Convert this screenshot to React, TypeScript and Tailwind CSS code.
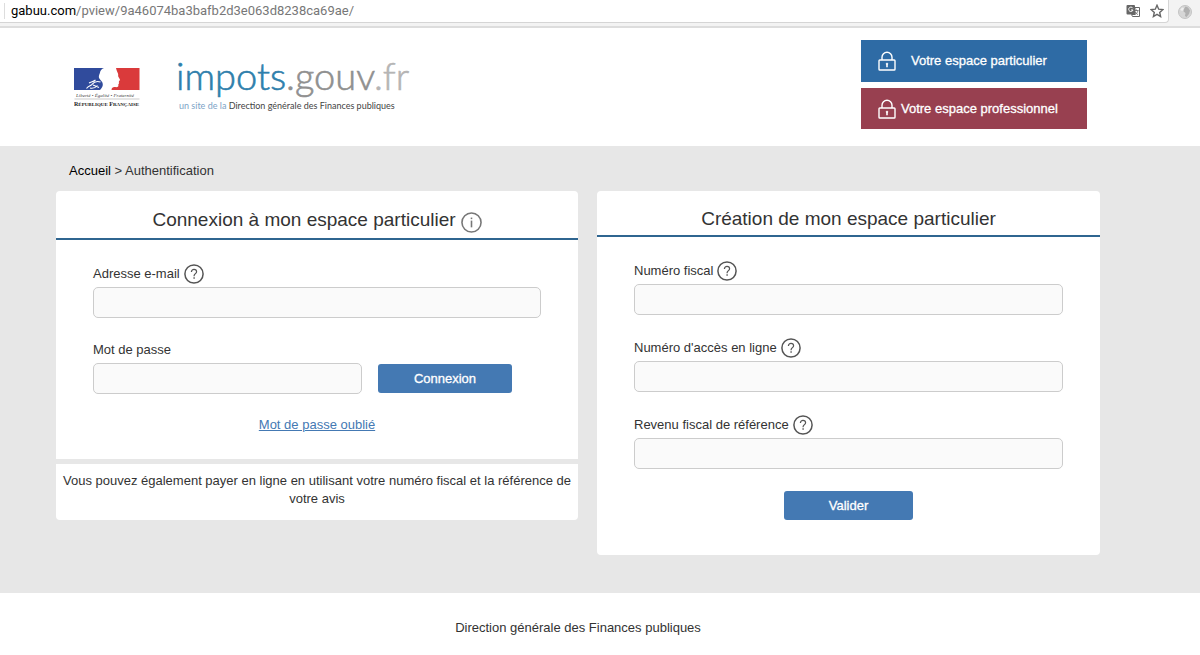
import { useId } from "react";
import type { ReactNode } from "react";

const path = "/pview/9a46074ba3bafb2d3e063d8238ca69ae/";

const inputClass =
  "block h-[31px] rounded-[5px] border border-[#cccccc] bg-[#fafafa] px-2 text-[13px] outline-none";
const buttonClass =
  "h-[29px] w-[30%] rounded-[3px] bg-[#4479b3] text-[13px] text-white [-webkit-text-stroke:0.3px_white]";

const RoundIcon = ({ type }: { type: "help" | "info" }) => (
  <svg
    className={
      type === "help"
        ? "h-5 w-5 shrink-0 text-[#555555]"
        : "mt-1 h-[21px] w-[21px] shrink-0 text-[#777777]"
    }
    viewBox="0 0 20 20"
    fill="none"
    stroke="currentColor"
  >
    <circle cx="10" cy="10" r="9.1" strokeWidth="1.5" />
    {type === "help" ? (
      <>
        <path
          d="M7.4 8.1c0-1.7 1.1-2.7 2.6-2.7s2.6.9 2.6 2.3c0 1.9-2.5 2-2.5 4.1v.5"
          strokeWidth="1.2"
        />
        <path d="M10.1 13.3v1.5" strokeWidth="1.4" />
      </>
    ) : (
      <>
        <path d="M10 8.2v6.4" strokeWidth="1.5" />
        <path d="M10 5.3v1.5" strokeWidth="1.5" />
      </>
    )}
  </svg>
);

const Padlock = () => (
  <svg
    className="h-5 w-[18px] shrink-0"
    viewBox="0 0 18 20"
    fill="none"
    stroke="currentColor"
    strokeWidth="1.4"
  >
    <rect x="1" y="9" width="16" height="10" rx="0.8" />
    <path d="M4 9V6.2a5 5 0 0 1 10 0V9" />
    <path d="M9 13.2v3" strokeWidth="1.6" />
    <circle cx="9" cy="12.9" r="0.8" fill="currentColor" strokeWidth="0.8" />
  </svg>
);

const Marianne = () => (
  <svg className="h-10 w-[66px]" viewBox="0 0 66 40" role="img" aria-label="République Française">
    <path
      d="M0 1h30c-2.5 1-3.8 2.6-4 4.6-.1 1.2-.8 1.900-1.100 3.400-.3 1.800.6 2.800 1.600 3.900 1.500 1.500 2.500 3.100 2.300 5.100-.1 1.800-1.300 3.500-2.800 5H0z"
      fill="#304b9c"
    />
    <path
      d="M42 1H65.500v22H37.500c.2-2.100 1.300-3 3.200-2.900 2.300.2 3.800.1 3.700-1.500l-.2-1.200.9-.6-.5-.8.6-.8-.4-1.200 1.300-.8c-.3-1.700-1.700-2.800-2-4.200.4-1.500-.1-3-.8-4.100-.6-1.300-1-2.700-1.300-3.900z"
      fill="#da3a3b"
    />
    <path
      d="M12.500 21.500c1.800-2.600 3.800-2.200 5.500-4.200 2-2.500 5-3.300 8.500-2.300M15 16c2.500-1.200 4-1 6.500-3M16 21c3 .6 5.500-.2 7.500-2.500M19 18l6 2.500"
      fill="none"
      stroke="white"
      strokeWidth="1.1"
    />
    <text x="2" y="30" className="fill-[#444444] font-['Liberation_Serif',serif] text-[5px] italic">
      Liberté • Égalité • Fraternité
    </text>
    <path d="M0.5 32H65.5" stroke="#aaaaaa" strokeWidth="0.6" />
    <text x="0" y="39" className="fill-[#222222] font-['Liberation_Serif',serif] text-[6px] font-bold">
      R<tspan className="text-[5px]">ÉPUBLIQUE</tspan> F<tspan className="text-[5px]">RANÇAISE</tspan>
    </text>
  </svg>
);

const AddressBar = () => (
  <div className="flex h-7 flex-col border-b-2 border-[#dddddd] bg-[#f3f3f3]">
    <div className="flex h-[23px] justify-between">
      <div className="flex flex-1 items-center justify-between rounded-br border-r border-b border-[#d5d5d5] bg-white pr-1 pl-1">
        <div className="flex items-center gap-1.5 font-[Roboto,sans-serif] text-[13px] text-[#777777]">
          <span className="h-4 w-px bg-[#dddddd]" />
          <span>
            <span className="text-black">gabuu.com</span>
            {path}
          </span>
        </div>
        <div className="flex items-center gap-2.5 text-[#666666]">
          <svg className="h-3.5 w-3.5" viewBox="0 0 14 14">
            <rect x="0.5" y="1" width="8.5" height="9.5" rx="1" fill="currentColor" />
            <path d="M6.8 4.2A2.2 2.2 0 1 0 7 6H5" fill="none" stroke="white" />
            <path d="M9 3.5h4.5v9h-7l-1-2H9z" fill="white" stroke="currentColor" />
            <path
              d="M8.5 6.5h4M10.5 5.5v1M12 6.5c-.5 2-1.5 3-3 4M9.2 8c.6 1.2 1.4 2 2.8 2.6"
              fill="none"
              stroke="currentColor"
              strokeWidth="0.8"
            />
          </svg>
          <svg
            className="h-3.5 w-3.5"
            viewBox="0 0 14 14"
            fill="none"
            stroke="currentColor"
            strokeWidth="1.4"
          >
            <path d="M7 1.3l1.7 3.9 4.2.4-3.2 2.8.9 4.1L7 10.3l-3.6 2.2.9-4.1L1.1 5.6l4.2-.4z" />
          </svg>
        </div>
      </div>
      <div className="flex w-[31px] items-center justify-center">
        <svg className="h-3.5 w-3.5" viewBox="0 0 14 14">
          <circle cx="7" cy="7" r="6.5" fill="#d6d6d6" stroke="#c4c4c4" />
          <path d="M7.5 1.5l2.500 1 2 3-1 3.500-2.500 3-1.500-1 .5-3-2-1.500.5-2.500z" fill="#b0b0b0" />
          <path d="M2 5l2-2.5 2 .5-1.5 3z" fill="#efefef" />
        </svg>
      </div>
    </div>
  </div>
);

const Header = () => (
  <header className="flex items-start justify-between bg-white pt-3 pr-[113px] pb-[17px] pl-[74px]">
    <div className="flex items-start gap-9 pt-[27px]">
      <Marianne />
      <div className="-mt-4 font-[Lato,sans-serif]">
        <div className="text-[38px] leading-[48px] font-light text-[#909090] [-webkit-text-stroke:0.6px_currentColor]">
          <span className="text-[#2f7fac]">impots</span>.gouv
          <span className="text-[#b5b5b5]">.fr</span>
        </div>
        <p className="pl-[3px] text-[9px] leading-[14px] text-[#444444]">
          <span className="text-[#7da3c6]">un site de la</span> Direction générale des Finances publiques
        </p>
      </div>
    </div>
    <nav className="flex w-[226px] flex-col gap-1.5 text-[13px] text-white [-webkit-text-stroke:0.3px_white]">
      <a href="#particulier" className="flex h-[42px] items-center gap-[15px] bg-[#2e6ba5] pl-[17px]">
        <Padlock />
        Votre espace particulier
      </a>
      <a href="#professionnel" className="flex h-[41px] items-center gap-[5px] bg-[#984050] pl-[17px]">
        <Padlock />
        Votre espace professionnel
      </a>
    </nav>
  </header>
);

const Title = ({ children }: { children: ReactNode }) => (
  <h2 className="flex items-center justify-center gap-[5px] border-b-2 border-[#2f6590] text-[19px]">
    {children}
  </h2>
);

type FieldProps = {
  label: string;
  help?: boolean;
  type?: string;
  children?: ReactNode;
};

const Field = ({ label, help, type = "text", children }: FieldProps) => {
  const id = useId();
  return (
    <div>
      <div className="mb-[3px] flex h-5 items-center gap-1">
        <label htmlFor={id}>{label}</label>
        {help && <RoundIcon type="help" />}
      </div>
      <div className="flex items-center gap-4">
        <input id={id} type={type} className={`${inputClass} ${children ? "w-[60%]" : "w-full"}`} />
        {children}
      </div>
    </div>
  );
};

const App = () => {
  return (
    <div className="bg-white font-['Liberation_Sans',Arial,sans-serif] text-[13px] leading-[18px] text-[#333333]">
      <AddressBar />
      <Header />
      <main className="bg-[#e7e7e7] pt-4 pr-[100px] pb-[38px] pl-14">
        <div className="mb-[11px] pl-[13px]">
          <a href="#accueil" className="text-black">
            Accueil
          </a>{" "}
          &gt; Authentification
        </div>
        <div className="grid grid-cols-[522fr_503fr] items-start gap-[19px]">
          <div className="flex flex-col gap-[5px]">
            <section className="rounded-t bg-white pt-[11px] pb-[25px]">
              <Title>
                <span className="leading-9">Connexion à mon espace particulier</span>
                <RoundIcon type="info" />
              </Title>
              <form
                className="flex flex-col gap-[22px] px-[37px] pt-6"
                onSubmit={(e) => e.preventDefault()}
              >
                <Field label="Adresse e-mail" help />
                <Field label="Mot de passe" type="password">
                  <button className={buttonClass}>Connexion</button>
                </Field>
                <a href="#oublie" className="self-center text-[#4479b3] underline">
                  Mot de passe oublié
                </a>
              </form>
            </section>
            <p className="rounded-b bg-white px-1 pt-2 pb-3 text-center">
              Vous pouvez également payer en ligne en utilisant votre numéro fiscal et la référence de
              votre avis
            </p>
          </div>
          <section className="rounded bg-white pt-3 pb-[35px]">
            <Title>
              <span className="leading-8">Création de mon espace particulier</span>
            </Title>
            <form
              className="flex flex-col px-[37px] pt-6"
              onSubmit={(e) => e.preventDefault()}
            >
              <div className="flex flex-col gap-[23px]">
                <Field label="Numéro fiscal" help />
                <Field label="Numéro d'accès en ligne" help />
                <Field label="Revenu fiscal de référence" help />
              </div>
              <button className={`${buttonClass} mt-[22px] self-center`}>Valider</button>
            </form>
          </section>
        </div>
      </main>
      <footer className="pt-[26px] pr-[100px] pb-5 pl-14 text-center">
        Direction générale des Finances publiques
      </footer>
    </div>
  );
};

export default App;
